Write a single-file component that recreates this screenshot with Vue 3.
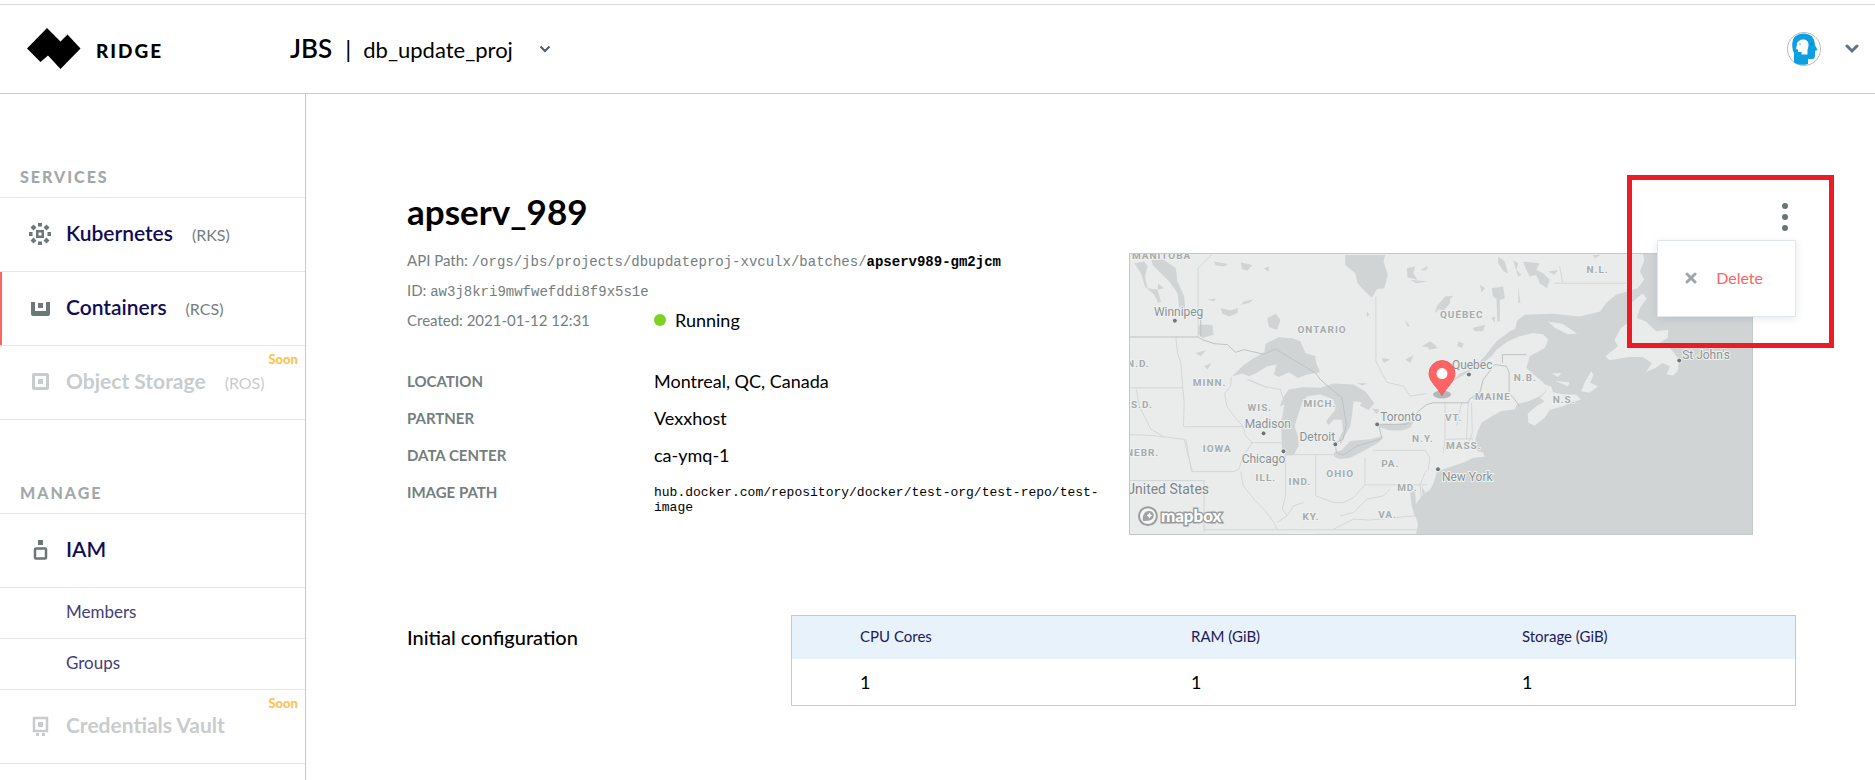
<script setup>
const services = [
  { name: 'Kubernetes', code: '(RKS)', icon: 'kubernetes' },
  { name: 'Containers', code: '(RCS)', icon: 'containers', active: true },
  { name: 'Object Storage', code: '(ROS)', icon: 'storage', soon: true },
]

const idPath = 'aw3j8kri9mwfwefddi8f9x5s1e'

const columns = ['CPU Cores', 'RAM (GiB)', 'Storage (GiB)']
const values = [1, 1, 1]

const regions = [
  ['MANITOBA', 2, 5], ['ONTARIO', 168, 79], ['N.D.', -3, 113], ['MINN.', 63, 132],
  ['S.D.', 1, 155], ['WIS.', 118, 158], ['MICH.', 174, 154], ['IOWA', 73, 199],
  ['NEBR.', -4, 203], ['ILL.', 126, 228], ['IND.', 159, 232], ['OHIO', 197, 224],
  ['PA.', 252, 214], ['N.Y.', 283, 189], ['MD.', 268, 238], ['KY.', 173, 267],
  ['VA.', 249, 265], ['TENN.', 157, 288], ['N.L.', 458, 19], ['QUÉBEC', 311, 64],
  ['N.B.', 385, 127], ['MAINE', 346, 147], ['VT.', 316, 168], ['N.S.', 424, 150],
  ['MASS.', 317, 196],
]

const cities = [
  ['Winnipeg', 24, 62, 45, 67], ['Madison', 115, 175, 134, 180], ['Toronto', 251, 168, 248, 171],
  ['Detroit', 170, 188, 206, 191], ['Chicago', 112, 210, 154, 198], ['Quebec', 323, 115, 340, 121],
  ['New York', 313, 228, 309, 216], ["St John's", 554, 105, 551, 107],
]
</script>

<template>
  <div class="page">
    <header class="topbar">
      <a class="brand" href="#">
        <svg class="brand-mark" width="54" height="42" viewBox="0 0 54 42" aria-hidden="true">
          <path d="M20 0 33.500 13.500 40.500 6.500 53.500 20.500 33.500 41 21 27.500 13.500 34 0 20.500z" />
        </svg>
        <span class="brand-name">RIDGE</span>
      </a>
      <button class="project" type="button">
        <span class="org">JBS</span>
        <span class="bar">|</span>
        <span class="proj">db_update_proj</span>
        <svg width="12" height="8" viewBox="0 0 12 8" aria-hidden="true"><path d="M1.500 1.500 6 6l4.500-4.500" fill="none" stroke="#4f5a70" stroke-width="2" /></svg>
      </button>
      <button class="account" type="button" aria-label="Account">
        <svg width="34" height="34" viewBox="0 0 34 34" aria-hidden="true">
          <circle cx="17" cy="17" r="16.500" fill="#fff" stroke="#b5bcc2" />
          <path d="M7 30.500V21C4.500 16 4.500 8 8 4.500 13 .5 20 .5 24.500 4c2.500 2.500 3 5 3.500 9l2.500 5-2.500 1v4c0 3-1 4-3 4h-4v5c-5 1.500-10 1-14-1.500z" fill="#0c9fe2" />
          <path d="M10 12c.5-3 3-4.500 6-4.500 3.500 0 5.500 2 5.500 5 0 2.500-.5 4-1 5v5h-6v-2.500h-3.500V17.500L9 17z" fill="#fff" />
          <circle cx="13" cy="12" r="1" fill="#8fd0ee" /><circle cx="24.500" cy="12" r="1" fill="#0879b5" />
        </svg>
        <svg class="caret" width="14" height="10" viewBox="0 0 14 10" aria-hidden="true"><path d="M2 2l5 5 5-5" fill="none" stroke="#63708c" stroke-width="3" stroke-linecap="round" /></svg>
      </button>
    </header>

    <div class="body">
      <nav class="sidebar">
        <h2 class="group">SERVICES</h2>
        <a v-for="s in services" :key="s.name" href="#" class="item" :class="{ active: s.active, disabled: s.soon }">
          <svg class="icon" width="24" height="24" viewBox="0 0 24 24" aria-hidden="true" fill="currentColor">
            <template v-if="s.icon === 'kubernetes'">
              <path d="M10 1h4v3.500h-4zM10 19.500h4V23h-4zM1 10h3.500v4H1zM19.500 10H23v4h-3.500zM5.500 2.500l3 3-3 3-3-3zM18.500 2.500l3 3-3 3-3-3zM5.500 15.500l3 3-3 3-3-3zM18.500 15.500l3 3-3 3-3-3z" />
              <path d="M8 8h8v8H8zm2.500 2.500v3h3v-3z" fill-rule="evenodd" />
            </template>
            <template v-else-if="s.icon === 'containers'">
              <path d="M3 6h4v9h11V6h4v12q0 2-2 2H5q-2 0-2-2z" /><path d="M10 7h5v5h-5z" />
            </template>
            <template v-else>
              <path d="M5 3h14q2 0 2 2v13q0 2-2 2H6q-2 0-2-2V5q0-2 1-2zm2 3v11h11V6z" fill-rule="evenodd" /><path d="M10 9h5v5h-5z" />
            </template>
          </svg>
          <span class="name">{{ s.name }}</span>
          <span class="code">{{ s.code }}</span>
          <span v-if="s.soon" class="soon">Soon</span>
        </a>

        <h2 class="group manage">MANAGE</h2>
        <a href="#" class="item">
          <svg class="icon" width="24" height="24" viewBox="0 0 24 24" aria-hidden="true">
            <path d="M10 2h5v5h-5z" fill="currentColor" /><rect x="7" y="10.500" width="11" height="10" rx="1" fill="none" stroke="currentColor" stroke-width="2.500" />
          </svg>
          <span class="name">IAM</span>
        </a>
        <a href="#" class="sub">Members</a>
        <a href="#" class="sub">Groups</a>
        <a href="#" class="item disabled">
          <svg class="icon" width="24" height="24" viewBox="0 0 24 24" aria-hidden="true" fill="currentColor">
            <rect x="6" y="4" width="13" height="13" fill="none" stroke="currentColor" stroke-width="2.500" /><path d="M10 8h5v5h-5zM8 19h3v3H8zM14 19h3v3h-3z" />
          </svg>
          <span class="name">Credentials Vault</span>
          <span class="soon">Soon</span>
        </a>
      </nav>

      <main class="main">
        <div class="head">
          <h1>apserv_989</h1>
          <div class="actions">
            <button class="kebab" type="button" aria-label="More actions">
              <svg width="6" height="28" viewBox="0 0 6 28" aria-hidden="true" fill="#677476"><circle cx="3" cy="3" r="3" /><circle cx="3" cy="14" r="3" /><circle cx="3" cy="25" r="3" /></svg>
            </button>
            <div class="menu">
              <button class="delete" type="button">
                <svg width="12" height="12" viewBox="0 0 12 12" aria-hidden="true"><path d="M2 2l8 8M10 2l-8 8" stroke="#a0a5a7" stroke-width="3" stroke-linecap="round" /></svg>
                Delete
              </button>
            </div>
            <div class="frame"></div>
          </div>
        </div>

        <section class="overview">
          <div class="info">
            <p class="meta">API Path: <span class="mono">/orgs/jbs/projects/dbupdateproj-xvculx/batches/<b>apserv989-gm2jcm</b></span></p>
            <p class="meta">ID: <span class="mono">{{ idPath }}</span></p>
            <div class="created">
              <p class="meta">Created: 2021-01-12 12:31</p>
              <span class="status"><i class="dot"></i>Running</span>
            </div>
            <dl class="details">
              <dt>LOCATION</dt><dd>Montreal, QC, Canada</dd>
              <dt>PARTNER</dt><dd>Vexxhost</dd>
              <dt>DATA CENTER</dt><dd>ca-ymq-1</dd>
              <dt>IMAGE PATH</dt><dd class="image-path">hub.docker.com/repository/docker/test-org/test-repo/test-image</dd>
            </dl>
          </div>

          <div class="map">
            <svg viewBox="0 0 624 281" preserveAspectRatio="xMidYMid slice" role="img" aria-label="Map">
              <rect width="624" height="281" fill="#e9eceb" />
              <g transform="translate(301 -14) scale(.33333)" fill="#d0d4d5">
                <path d="M-43 890-36 855-48 820-40 790-20 765 0 752 12 728 20 700 40 690 75 678 105 668 130 655 165 652 160 640 142 634 136 600 146 570 155 550 190 528 215 515 255 510 262 494 300 484 330 470 348 455 342 430 312 405 290 385 300 350 345 325 356 300 340 284 310 280 270 290 235 305 200 330 185 350 150 378 110 400 70 425 55 437 90 402 130 385 165 350 200 305 240 275 256 268 262 242 285 225 370 222 450 230 512 215 530 190 560 165 592 155 625 145 645 120 632 95 645 60 640 40 980 40V890z" />
                <path fill="#e9eceb" d="M338 432 365 442 370 458 400 464 440 466 455 480 425 490 400 500 360 512 345 535 315 558 296 550 294 522 320 500 345 485 330 475 350 455zM455 455 465 430 485 395 492 405 482 430 506 440 480 460zM605 190 640 160 652 175 632 205 622 235 650 245 680 275 717 270 715 295 690 310 722 325 750 360 745 395 730 408 712 404 722 380 700 370 678 385 650 397 668 370 640 352 600 352 540 362 528 350 565 320 555 300 575 265 595 250zM355 245 400 253 443 282 415 284 375 264zM366 402 395 400 385 412zM375 424 420 428 415 440z" />
                <path d="M205 50 225 65 235 100 222 95 205 70zM250 60 265 70 260 90 275 105 265 110zM280 65 330 70 320 90 340 100 360 120 352 145 330 130 320 105 300 110 290 90zM355 95 385 90 375 105zM185 145 220 140 225 175 205 182 190 170zM200 180 210 180 210 245 203 245zM265 140 272 190 266 190zM20 200 45 170 70 168 50 190 15 220zM128 265 165 255 160 275 135 275zM0 310 25 325-5 330zM85 305 102 312 95 325 82 318zM150 135 165 145 155 158zM185 235 195 230 195 250zM490 45 512 45 497 55z" />
              </g>
              <g transform="translate(-9 -14) scale(.33333)" fill="#d0d4d5">
                <path d="M335 410 365 380 400 355 432 337 435 312 475 293 515 296 540 305 555 340 585 350 587 370 600 398 560 405 533 415 505 398 475 412 460 405 468 375 440 380 408 400 385 410 365 402z" />
                <path d="M478 500 490 470 505 450 545 443 600 445 640 432 700 435 735 455 750 475 762 492 745 512 718 498 725 488 700 485 695 530 690 560 675 588 660 618 655 600 668 575 665 542 640 540 625 557 617 546 645 510 640 480 600 465 560 470 545 490 535 520 522 560 532 590 535 620 518 648 494 648 484 625 482 550 492 495z" />
                <path d="M640 640 665 632 690 605 750 600 790 590 778 608 730 635 690 655 660 660 642 652zM773 562 785 552 830 554 882 545 870 565 845 573 810 573zM755 507 778 510 770 525zM710 430 742 432 725 438z" />
                <path d="M675 45H795L790 65 803 105 792 145 770 148 755 174 735 155 712 130 705 100 675 75zM90 50 130 60 165 85 170 125 190 170 193 205 175 205 170 160 145 125 130 110 95 75zM40 70 70 65 80 80 72 110 80 145 110 150 120 185 112 190 100 165 72 140 60 100zM112 132 130 145 110 150zM235 255 275 255 278 285 245 295 230 280zM440 235 465 222 480 240 470 270 445 262zM300 205 330 212 352 205 350 220 325 230 305 222zM260 180 285 176 280 184zM370 185 400 178 385 190 360 195zM280 65 322 72 310 80 285 76zM360 67 395 75 380 92 365 88zM860 85 885 80 880 100 892 120 862 112zM870 120 922 125 890 130zM225 340 255 332 240 350zM250 380 272 370 260 390zM905 320 930 305 950 320 930 325zM855 360 880 348 870 370zM785 355 810 360 790 370zM740 215 748 225 740 232zM855 240 870 260 862 260zM900 90 925 78 918 92zM960 205 990 170 990 190 965 220zM430 85 447 80 442 95zM870 760 885 755 888 800 898 830 885 835 875 800zM905 740 915 760 908 770z" />
              </g>
              <g transform="translate(-9 -14) scale(.33333)" fill="none" stroke="#d3d7d7" stroke-width="3">
                <path d="M232 292V85L272 45M165 292 170 340 180 370 186 445 190 490 188 562 M28 445H186M190 562H368L375 590 395 610 365 655 355 690 340 697H212L195 600 M28 586 90 588 150 595 190 600 205 660 215 697M28 724H250V878M332 412 330 440 312 462 318 500 340 530 368 562M385 420 430 440 480 450 490 485M390 610H482M495 645V770L485 810 500 830M586 645V770M495 646H640M734 655V737H920M757 633H915L930 655 925 690 915 700 900 737 905 790H915M360 697 368 740 400 780 430 810 460 850 470 872M550 790 520 800 500 830 470 850M586 770 640 790 670 790 700 775 734 737M660 830 700 820 740 780 790 770 810 750M640 870 700 840 750 843 885 830M250 872H900M767 170V365L785 400 800 428 850 440 870 470 920 462M975 490V600L970 640M45 445 55 500 90 570 130 592M380 420 440 445M1045 490 1040 600M1055 490 1057 580 1040 630 975 630M1060 598 975 600M1305 130H1520M1320 80 1330 130M1025 490 1010 560" />
                <path stroke="#bdc2c3" d="M28 292H232L245 300 280 312 320 315 345 338 370 330 430 344 465 328 585 400 600 420 635 450 665 475 678 555 668 600 645 610 648 640 668 648 710 620 785 598 775 555H860L890 520 920 495 940 490H1045L1050 478 1080 460 1090 420 1125 375 1160 380 1168 400V460L1185 480 1200 500M240 240V290M1080 470 1060 478M1148 370V345L1220 345" />
              </g>
              <g class="region-labels"><text v-for="r in regions" :key="r[0]" :x="r[1]" :y="r[2]">{{ r[0] }}</text></g>
              <g class="city-labels">
                <template v-for="c in cities" :key="c[0]">
                  <circle :cx="c[3]" :cy="c[4]" r="2.500" />
                  <text :x="c[1]" :y="c[2]">{{ c[0] }}</text>
                </template>
                <text class="country" x="-4" y="241">United States</text>
              </g>
              <g class="mapbox">
                <circle cx="18" cy="263" r="9" fill="#f4f5f5" stroke="#9a9d9d" stroke-width="2" />
                <path d="M13 268c-1-6 2-11 7-10s5 7 1 9c-2 1-5 1-8 1z" fill="#a1a4a4" />
                <path d="M19.500 259.500l1 2 2 1-2 1-1 2-1-2-2-1 2-1z" fill="#fff" />
                <text x="31" y="269">mapbox</text>
              </g>
              <ellipse cx="313" cy="141" rx="9" ry="4" fill="#70777a" opacity=".45" />
              <path d="M313 142c-5-9-13-14-13-22a13 13 0 0 1 26 0c0 8-8 13-13 22z" fill="#ff6464" stroke="#e85d60" />
              <circle cx="313" cy="120" r="5.500" fill="#fff" />
            </svg>
          </div>
        </section>

        <section class="config">
          <h3>Initial configuration</h3>
          <table>
            <thead><tr><th v-for="c in columns" :key="c" scope="col">{{ c }}</th></tr></thead>
            <tbody><tr><td v-for="(v, i) in values" :key="i">{{ v }}</td></tr></tbody>
          </table>
        </section>
      </main>
    </div>
  </div>
</template>

<style>
body { margin: 0; background: #fff; }
</style>

<style scoped>
.page { height: 100vh; overflow: hidden; display: flex; flex-direction: column; font-family: Lato, "Noto Sans", sans-serif; color: #000; }
button { border: 0; background: none; padding: 0; font: inherit; color: inherit; cursor: pointer; }
a { color: inherit; text-decoration: none; }
h1, h2, h3, p, dl, dd { margin: 0; }

.topbar { display: flex; align-items: center; flex: none; height: 88px; margin-top: 4px; border-top: 1px solid #d9dade; border-bottom: 1px solid #c8c9c9; }
.brand { display: flex; align-items: center; gap: 15px; width: 263px; padding-left: 27px; }
.brand-name { font-size: 19px; font-weight: 900; line-height: 24px; padding-top: 3px; letter-spacing: 2px; }
.project { display: flex; align-items: baseline; line-height: 32px; }
.org { font-size: 26px; font-weight: 600; }
.bar { margin: 0 12px 0 13px; font-size: 24px; }
.proj { font-size: 22px; }
.project svg { align-self: center; margin-left: 26px; }
.account { display: flex; align-items: center; gap: 24px; margin-left: auto; padding-right: 16px; }

.body { flex: 1; min-height: 0; display: flex; }
.sidebar { box-sizing: border-box; flex: none; width: 306px; border-right: 1px solid #c8c9c9; }
.group { box-sizing: border-box; height: 104px; padding: 73px 20px 0; border-bottom: 1px solid #e5e7e7; font-size: 16px; line-height: 20px; font-weight: 900; letter-spacing: 2px; color: #a3a9a9; }
.group.manage { height: 94px; padding-top: 63px; }
.item { position: relative; box-sizing: border-box; display: flex; align-items: baseline; height: 74px; padding: 22px 0 0 66px; border-bottom: 1px solid #e5e7e7; line-height: 26px; }
.item.active { box-shadow: inset 2px 0 #ff6464; }
.icon { position: absolute; left: 28px; top: 24px; color: #6b7778; }
.name { font-size: 21px; font-weight: 600; color: #120c54; }
.code { margin-left: 19px; font-size: 16px; color: #737e7f; }
.soon { position: absolute; right: 7px; top: 4px; font-size: 13px; line-height: 18px; font-weight: 900; color: #ffc253; }
.disabled .name { font-weight: 700; }
.disabled .icon, .disabled .name, .disabled .code { color: #c9cccc; }
.sub { box-sizing: border-box; display: block; height: 51px; padding-left: 66px; border-bottom: 1px solid #e5e7e7; font-size: 17px; line-height: 48px; color: #433e78; }

.main { flex: 1; min-width: 0; padding: 97px 79px 0 101px; }
.head { display: flex; justify-content: space-between; }
h1 { font-size: 35px; line-height: 40px; font-weight: 700; }
.actions { position: relative; }
.kebab { display: block; margin: 12px 8px 0 0; height: 28px; }
.kebab svg { display: block; }
.menu { position: absolute; z-index: 2; right: 0; top: 49px; border: 1px solid #e1e5ec; background: #fff; box-shadow: 0 2px 8px rgba(60, 70, 90, .12); }
.delete { display: flex; align-items: center; gap: 19px; padding: 0 32px 1px 27px; font-size: 16px; line-height: 74px; color: #ff6464; }
.frame { position: absolute; z-index: 3; right: -38px; top: -16px; box-sizing: border-box; width: 207px; height: 173px; border: 5px solid #ed1c24; pointer-events: none; }

.overview { display: flex; margin: 14px 43px 0 0; }
.info { flex: 1; min-width: 0; }
.meta { font-size: 15px; line-height: 30px; color: #737e7f; }
.mono, .image-path { font-family: "Liberation Mono", monospace; font-size: 14px; }
.mono { line-height: 16px; }
.mono b { color: #000; }
.created { display: grid; grid-template-columns: 247px 1fr; }
.status { display: flex; align-items: center; gap: 9px; font-size: 18px; line-height: 30px; }
.dot { width: 12px; height: 12px; border-radius: 50%; background: #7ed321; }
.details { display: grid; grid-template-columns: 247px 1fr; row-gap: 13px; margin-top: 34px; line-height: 24px; }
dt { font-size: 15px; font-weight: 700; color: #737e7f; }
dd { font-size: 18px; min-width: 0; }
dd.image-path { padding-top: 5px; font-size: 13px; line-height: 15px; }
.map { box-sizing: border-box; flex: none; width: 624px; height: 282px; margin-top: 8px; border: 1px solid #c3c9ca; }
.map svg { display: block; width: 100%; height: 100%; }
.map text { font-family: Roboto, sans-serif; paint-order: stroke; stroke: #eff1f1; stroke-width: 2px; }
.region-labels text { font-size: 10px; font-weight: 700; letter-spacing: 1px; fill: #a5abac; }
.city-labels text { font-size: 12px; fill: #8b9293; }
.city-labels circle { fill: #6b7778; stroke: #eff1f1; }
.map .city-labels .country { font-size: 14px; fill: #7d8587; }
.map .mapbox text { font-family: Lato, sans-serif; font-size: 17px; font-weight: 900; fill: #fff; stroke: #9a9d9d; stroke-width: 3px; }

.config { display: flex; margin-top: 80px; }
h3 { flex: none; width: 384px; padding-top: 10px; font-size: 20px; line-height: 24px; font-weight: 500; }
table { flex: 1; width: 100%; min-width: 0; table-layout: fixed; border-collapse: separate; border-spacing: 0; border: 1px solid #c5c9ca; }
th, td { box-sizing: border-box; padding: 0 0 0 68px; text-align: left; font-weight: 400; }
th { width: 33%; height: 43px; padding-bottom: 4px; background: #e8f2fb; font-size: 15px; color: #1d1a5b; }
th:last-child { width: 34%; }
td { height: 46px; font-size: 18px; }
</style>
